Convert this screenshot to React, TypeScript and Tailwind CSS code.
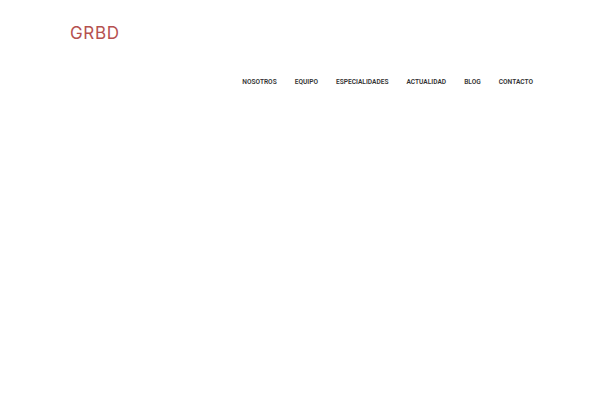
export default function App() {
  const links = ["Nosotros", "Equipo", "Especialidades", "Actualidad", "Blog", "Contacto"];

  return (
    <div className="h-[400px] w-[600px] bg-white">
      <header className="flex flex-col pl-[70px] pr-[67px] pt-[23px]">
        <a
          href="#"
          className="text-[17px] leading-5 tracking-[0.04em] text-[#b5514f]"
          style={{ fontFamily: "Inter, 'Open Sans', sans-serif" }}
        >
          GRBD
        </a>
        <nav className="mt-[33px] flex justify-end gap-[18px]">
          {links.map((l) => (
            <a
              key={l}
              href="#"
              className="text-[6.6px] font-semibold uppercase leading-3 text-[#333]"
              style={{ fontFamily: "Roboto, sans-serif" }}
            >
              {l}
            </a>
          ))}
        </nav>
      </header>
    </div>
  );
}
